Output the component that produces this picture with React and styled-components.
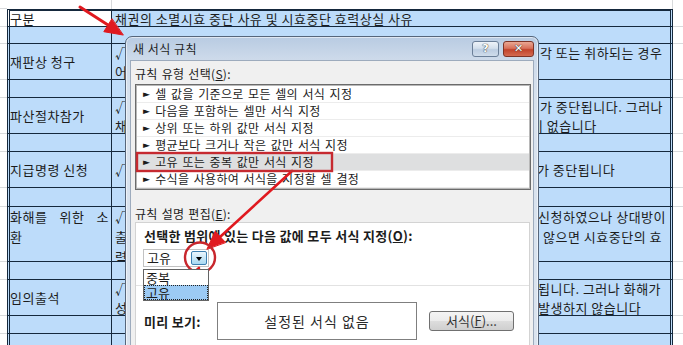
import React from "react";
import styled, { createGlobalStyle } from "styled-components";

const BLUE = "#bddcfa";
const LINE = "#15283c";
const GRID = "#d8dadc";
const RED = "#e0191f";

const GlobalStyle = createGlobalStyle`
  body {
    margin: 0;
    background: #fff;
    font-family: "Noto Sans CJK KR", "Noto Sans", sans-serif;
  }
`;

const Page = styled.div`
  position: relative;
  width: 683px;
  height: 345px;
  overflow: hidden;
  background: #fff;
  color: #1c1c1c;
`;

const Sheet = styled.div`
  display: flex;
  flex-direction: column;
`;

const Row = styled.div`
  display: grid;
  grid-template-columns: 7px 105px 561px 1fr;
  height: ${(p) => p.$h}px;
  flex: none;
`;

const Gutter = styled.div`
  border-bottom: 1px solid ${GRID};
`;

const Blank = styled.div`
  border-right: 1px solid ${GRID};
`;

const LabelCell = styled.div`
  box-sizing: border-box;
  background: ${(p) => (p.$white ? "#fff" : BLUE)};
  border-left: 3px double ${LINE};
  border-right: 1px solid ${LINE};
  border-bottom: 1px solid ${LINE};
  border-top: ${(p) => (p.$head ? `2px solid ${LINE}` : "none")};
  display: flex;
  flex-direction: column;
  justify-content: ${(p) => (p.$topAlign ? "flex-start" : "center")};
  font-size: 13px;
  line-height: 20px;
  letter-spacing: 0.5px;
  overflow: hidden;
`;

const Justified = styled.span`
  display: block;
  text-align: justify;
  text-align-last: justify;
  padding-right: 2px;
`;

const TextCell = styled.div`
  box-sizing: border-box;
  background: ${BLUE};
  border-right: 3px double ${LINE};
  border-bottom: 1px solid ${LINE};
  border-top: ${(p) => (p.$head ? `2px solid ${LINE}` : "none")};
  display: flex;
  flex-direction: column;
  justify-content: ${(p) => (p.$topAlign ? "flex-start" : "center")};
  padding-left: 3px;
  font-size: 13px;
  line-height: ${(p) => (p.$topAlign ? 20 : 19)}px;
  letter-spacing: 0.5px;
  white-space: nowrap;
  overflow: hidden;
`;

const Line = styled.div`
  display: grid;
  grid-template-columns: 425px 1fr;
`;

const Head = styled.span`
  overflow: hidden;
`;

const Tail = styled.span`
  margin-left: ${(p) => p.$shift || 0}px;
`;

/* dialog */

const Dialog = styled.div`
  position: absolute;
  left: 125px;
  top: 36px;
  width: 414px;
  height: 330px;
  box-sizing: border-box;
  border: 1px solid #56667b;
  border-radius: 7px 7px 0 0;
  background: linear-gradient(180deg, #b8cbe2 0, #cddaea 22px, #d8e2ee 60px, #dbe4ef 100%);
  box-shadow: inset 0 0 0 1px rgba(255, 255, 255, 0.55);
  padding: 0 4px;
  display: flex;
  flex-direction: column;
`;

const TitleBar = styled.div`
  display: flex;
  align-items: flex-start;
  height: 23px;
  padding-left: 3px;
  flex: none;
`;

const Title = styled.div`
  flex: 1;
  font-size: 12px;
  line-height: 24px;
  color: #1e1e1e;
  letter-spacing: 0.5px;
`;

const Caption = styled.div`
  display: flex;
  gap: 4px;
  padding-top: 4px;
`;

const CaptionButton = styled.div`
  box-sizing: border-box;
  width: ${(p) => p.$w}px;
  height: 16px;
  border-radius: 3px;
  border: 1px solid ${(p) => (p.$close ? "#7d3326" : "#6b7f98")};
  background: ${(p) =>
    p.$close
      ? "linear-gradient(180deg, #eaa894 0, #d8705a 45%, #c2432b 55%, #d46a50 100%)"
      : "linear-gradient(180deg, #eef3f9 0, #d3dfec 45%, #bccde1 55%, #cfdceb 100%)"};
  display: flex;
  align-items: center;
  justify-content: center;
  font-family: "DejaVu Sans", sans-serif;
  font-weight: 700;
  font-size: 11px;
  line-height: 14px;
  color: #fff;
  text-shadow: 0 0 1px #333, 0 0 1px #333;
`;

const Client = styled.div`
  flex: 1;
  background: #f0f0f0;
  border: 1px solid #9dabbd;
  padding: 0 4px;
  display: flex;
  flex-direction: column;
`;

const Label = styled.div`
  font-size: 12px;
  line-height: 17px;
  margin-top: ${(p) => p.$gap}px;
  letter-spacing: 0.3px;
  word-spacing: 1px;
`;

const ListBox = styled.div`
  box-sizing: border-box;
  width: 396px;
  height: 106px;
  margin-top: 2px;
  border: 1px solid #6b6b6b;
  box-shadow: inset 0 0 0 1px #b8b8b8;
  padding: 1px;
  background: #fff;
  flex: none;
`;

const RuleItem = styled.div`
  box-sizing: border-box;
  height: 17px;
  display: flex;
  align-items: center;
  gap: 5px;
  padding-left: 6px;
  border-bottom: 1px solid #ececec;
  background: ${(p) => (p.$selected ? "#dedfe0" : "#fff")};
  font-size: 12px;
  line-height: 16px;
  letter-spacing: 0.3px;
  word-spacing: 1.5px;
  white-space: nowrap;
`;

const Pointer = styled.span`
  font-family: "DejaVu Sans", sans-serif;
  font-size: 9px;
`;

const Panel = styled.div`
  width: 395px;
  flex: 1;
  box-sizing: border-box;
  background: #fff;
  border: 1px solid #d3d3d3;
  display: flex;
  flex-direction: column;
`;

const Section = styled.div`
  padding-left: 8px;
  position: relative;
`;

const Strong = styled.div`
  font-weight: 700;
  font-size: 13px;
  line-height: 17px;
  letter-spacing: 0.3px;
  margin-top: 4px;
  white-space: nowrap;
`;

const ComboWrap = styled.div`
  position: relative;
  width: 66px;
  height: 18px;
  margin: 5px 0 0 -1px;
`;

const Combo = styled.div`
  box-sizing: border-box;
  height: 100%;
  border: 1px solid #c2c2c2;
  display: flex;
  align-items: center;
  padding-left: 3px;
  font-size: 13px;
  line-height: 16px;
  background: #fff;
`;

const DropButton = styled.div`
  box-sizing: border-box;
  margin-left: auto;
  margin-right: 1px;
  width: 16px;
  height: 14px;
  border: 1px solid #3c7fb1;
  border-radius: 2px;
  background: linear-gradient(180deg, #eaf6fd 0, #c9e7f7 50%, #a9d9f2 100%);
  display: flex;
  align-items: center;
  justify-content: center;

  &::after {
    content: "";
    border-top: 4px solid #000;
    border-left: 3.5px solid transparent;
    border-right: 3.5px solid transparent;
    margin-top: 1px;
  }
`;

const DropList = styled.div`
  position: absolute;
  top: 20px;
  left: 0;
  width: 66px;
  box-sizing: border-box;
  border: 1px solid #646464;
  background: #fff;
  z-index: 2;
`;

const DropItem = styled.div`
  height: 15px;
  line-height: 15px;
  font-size: 13px;
  padding-left: 2px;
  background: ${(p) => (p.$selected ? "#9ccaf4" : "#fff")};
  outline: ${(p) => (p.$selected ? "1px dotted #222" : "none")};
  outline-offset: -1px;
`;

const Divider = styled.div`
  height: 1px;
  background: #e2e2e2;
  margin-top: 18px;
`;

const PreviewRow = styled.div`
  display: flex;
  align-items: center;
  margin-top: 16px;
  padding-left: 8px;
`;

const PreviewLabel = styled(Strong)`
  width: 73px;
  margin-top: 0;
`;

const PreviewBox = styled.div`
  box-sizing: border-box;
  width: 200px;
  height: 38px;
  border: 1px solid #7f7f7f;
  display: flex;
  align-items: center;
  justify-content: center;
  font-size: 14px;
  letter-spacing: 1px;
  color: #2a2a2a;
`;

const Button = styled.div`
  box-sizing: border-box;
  margin-left: 12px;
  width: 85px;
  height: 20px;
  border: 1px solid #707070;
  border-radius: 3px;
  background: linear-gradient(180deg, #f4f4f4 0, #ebebeb 50%, #dddddd 51%, #cfcfcf 100%);
  display: flex;
  align-items: center;
  justify-content: center;
  font-size: 13px;
  line-height: 16px;
  color: #333;
`;

const Overlay = styled.svg`
  position: absolute;
  left: 0;
  top: 0;
  pointer-events: none;
`;

const rows = [
  { h: 17 },
  {
    h: 36,
    label: "재판상 청구",
    lines: [
      ["√ 재판상의 청구는 소송이 각하, 기", "각 또는 취하되는 경우"],
      ["어느 경우에도 시효중단의 효력이 없습니다", ""],
    ],
  },
  { h: 18 },
  {
    h: 36,
    label: "파산절차참가",
    lines: [
      ["√ 파산절차에 참가하면 시효", "가 중단됩니다. 그러나"],
      ["채권자가 참가를 취소하거나 청구가 각하되면 효력", "이 없습니다", -9],
    ],
  },
  { h: 18 },
  {
    h: 36,
    label: "지급명령 신청",
    lines: [["√ 지급명령을 신청하면 소멸시효", "가 중단됩니다", -3]],
  },
  { h: 19 },
  {
    h: 55,
    top: true,
    labelLines: ["화해를 위한 소", "환"],
    lines: [
      ["√ 화해를 위하여 법원에 소환을", "신청하였으나 상대방이", -2],
      ["출석하지 않거나 화해가 성립되지 않은 때 1개월 내에 소를 제기하지", "않으면 시효중단의 효", 3],
      ["력이 없습니다", ""],
    ],
  },
  { h: 18 },
  {
    h: 36,
    label: "임의출석",
    lines: [
      ["√ 당사자 쌍방이 임의로 출석하면 시효가 중단", "됩니다. 그러나 화해가", -2],
      ["성립되지 않으면 1개월 내에 소를 제기하지 않는 한 효력이", "발생하지 않습니다", -2],
    ],
  },
  { h: 18 },
  {
    h: 36,
    label: "",
    lines: [["√ 채무자에게 이행을 청구하는 것이 최고이며 방식에 제한이 없습니", "다. 최고는 특별한 형식"]],
  },
];

const rules = [
  "셀 값을 기준으로 모든 셀의 서식 지정",
  "다음을 포함하는 셀만 서식 지정",
  "상위 또는 하위 값만 서식 지정",
  "평균보다 크거나 작은 값만 서식 지정",
  "고유 또는 중복 값만 서식 지정",
  "수식을 사용하여 서식을 지정할 셀 결정",
];

const Annotations = () => (
  <Overlay width="683" height="345" viewBox="0 0 683 345">
    <g fill={RED} stroke={RED} strokeLinecap="round" strokeLinejoin="round">
      <line x1="80" y1="7" x2="108" y2="25" strokeWidth="3" />
      <polygon points="123,35 103.8,31.7 111.8,19" strokeWidth="1" />
      <line x1="292" y1="171" x2="220" y2="237" strokeWidth="2.6" />
      <polygon points="207,249 215.2,231.3 225.4,242.3" strokeWidth="1" />
      <line x1="199" y1="268" x2="191" y2="275" strokeWidth="2.6" />
      <polygon points="179,287 186.8,270.6 195.8,280" strokeWidth="1" />
    </g>
    <rect x="137" y="153" width="195" height="18" fill="none" stroke="#c62a30" strokeWidth="2.4" />
    <circle cx="200" cy="257.5" r="15" fill="none" stroke="#c8272d" strokeWidth="2.4" />
  </Overlay>
);

export default function App() {
  return (
    <>
      <GlobalStyle />
      <Page>
        <Sheet>
          <Row $h={9}>
            <Gutter />
            <Blank />
            <Blank />
            <div />
          </Row>
          <Row $h={18}>
            <Gutter />
            <LabelCell $white $head>
              구분
            </LabelCell>
            <TextCell $head>채권의 소멸시효 중단 사유 및 시효중단 효력상실 사유</TextCell>
            <Gutter />
          </Row>
          {rows.map((r, i) => (
            <Row key={i} $h={r.h}>
              <Gutter />
              <LabelCell $topAlign={r.top}>
                {r.labelLines ? (
                  <>
                    <Justified>{r.labelLines[0]}</Justified>
                    <span>{r.labelLines[1]}</span>
                  </>
                ) : (
                  r.label
                )}
              </LabelCell>
              <TextCell $topAlign={r.top}>
                {(r.lines || []).map(([head, tail, shift], j) => (
                  <Line key={j}>
                    <Head>{head}</Head>
                    <Tail $shift={shift}>{tail}</Tail>
                  </Line>
                ))}
              </TextCell>
              <Gutter />
            </Row>
          ))}
        </Sheet>

        <Dialog>
          <TitleBar>
            <Title>새 서식 규칙</Title>
            <Caption>
              <CaptionButton $w={27}>?</CaptionButton>
              <CaptionButton $w={31} $close>
                ✕
              </CaptionButton>
            </Caption>
          </TitleBar>
          <Client>
            <Label $gap={4}>
              규칙 유형 선택(<u>S</u>):
            </Label>
            <ListBox>
              {rules.map((rule, i) => (
                <RuleItem key={rule} $selected={i === 4}>
                  <Pointer>►</Pointer>
                  {rule}
                </RuleItem>
              ))}
            </ListBox>
            <Label $gap={15}>
              규칙 설명 편집(<u>E</u>):
            </Label>
            <Panel>
              <Section>
                <Strong>
                  선택한 범위에 있는 다음 값에 모두 서식 지정(<u>O</u>):
                </Strong>
                <ComboWrap>
                  <Combo>
                    고유
                    <DropButton />
                  </Combo>
                  <DropList>
                    <DropItem>중복</DropItem>
                    <DropItem $selected>고유</DropItem>
                  </DropList>
                </ComboWrap>
              </Section>
              <Divider />
              <PreviewRow>
                <PreviewLabel>미리 보기:</PreviewLabel>
                <PreviewBox>설정된 서식 없음</PreviewBox>
                <Button>
                  서식(<u>F</u>)...
                </Button>
              </PreviewRow>
            </Panel>
          </Client>
        </Dialog>

        <Annotations />
      </Page>
    </>
  );
}
